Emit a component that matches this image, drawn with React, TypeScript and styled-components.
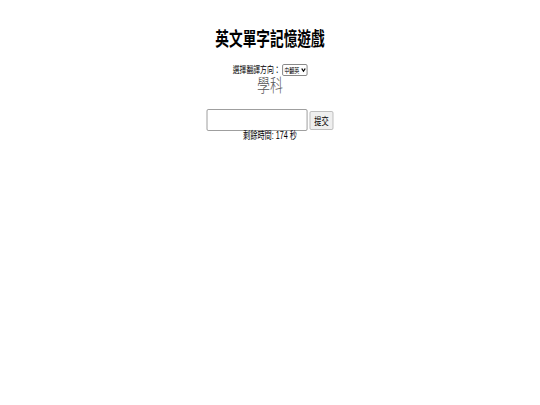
import React, { useState } from "react";
import styled, { createGlobalStyle } from "styled-components";

const GlobalStyle = createGlobalStyle`
  html, body {
    margin: 0;
    padding: 0;
    background: #ffffff;
  }
  body {
    font-family: "Liberation Sans", "Noto Sans CJK TC", sans-serif;
    color: #000000;
  }
`;

// the reference text is drawn narrow, so the whole page is squeezed horizontally
const Page = styled.div`
  width: 540px;
  display: flex;
  flex-direction: column;
  align-items: center;
  padding-top: 28px;
  transform: scaleX(0.72);
  transform-origin: 270px 0;
`;

const Title = styled.h1`
  margin: 0;
  font-size: 19px;
  line-height: 24px;
  font-weight: bold;
`;

const DirectionRow = styled.div`
  margin-top: 12px;
  display: flex;
  align-items: center;
  gap: 2px;
  font-size: 9.5px;
  line-height: 12px;
`;

const SelectBox = styled.span`
  position: relative;
  display: inline-flex;
`;

const DirectionSelect = styled.select`
  appearance: none;
  font-family: inherit;
  font-size: 7px;
  height: 12px;
  width: 35px;
  padding: 0 9px 0 2px;
  border: 1px solid #767676;
  border-radius: 2px;
  background: #ffffff;
  color: #000000;
`;

const Chevron = styled.svg`
  position: absolute;
  right: 2px;
  top: 3px;
  width: 7px;
  height: 6px;
  pointer-events: none;
`;

const Word = styled.div`
  font-size: 18px;
  line-height: 20px;
  color: #555555;
  font-weight: 300;
`;

const AnswerForm = styled.form`
  margin-top: 13px;
  display: flex;
  align-items: center;
  gap: 3px;
`;

const AnswerInput = styled.input`
  width: 140px;
  height: 22px;
  box-sizing: border-box;
  border: 1px solid #8f8f8f;
  border-radius: 2px;
  padding: 0 3px;
  font-size: 12px;
`;

const SubmitButton = styled.button`
  width: 33px;
  height: 19px;
  box-sizing: border-box;
  padding: 0;
  font-family: inherit;
  font-size: 10px;
  border: 1px solid #b5b5b5;
  border-radius: 2px;
  background: #efefef;
  color: #000000;
`;

const Timer = styled.div`
  margin-top: -1px;
  font-size: 10px;
  line-height: 12px;
`;

export default function App() {
  const [answer, setAnswer] = useState("");
  const [direction, setDirection] = useState("zh-en");

  return (
    <>
      <GlobalStyle />
      <Page>
        <Title>英文單字記憶遊戲</Title>
        <DirectionRow>
          <span>選擇翻譯方向：</span>
          <SelectBox>
            <DirectionSelect value={direction} onChange={(e) => setDirection(e.target.value)}>
              <option value="zh-en">中翻英</option>
              <option value="en-zh">英翻中</option>
            </DirectionSelect>
            <Chevron viewBox="0 0 7 6">
              <path d="M1 1.5 L3.5 4.2 L6 1.5" fill="none" stroke="#000" strokeWidth="1.4" />
            </Chevron>
          </SelectBox>
        </DirectionRow>
        <Word>學科</Word>
        <AnswerForm onSubmit={(e) => e.preventDefault()}>
          <AnswerInput value={answer} onChange={(e) => setAnswer(e.target.value)} />
          <SubmitButton type="submit">提交</SubmitButton>
        </AnswerForm>
        <Timer>剩餘時間: 174 秒</Timer>
      </Page>
    </>
  );
}
